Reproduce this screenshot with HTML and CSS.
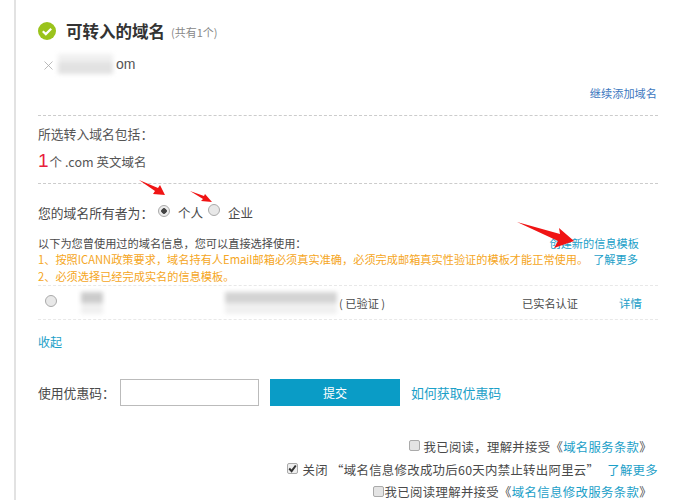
FILE: index.html
```html
<!DOCTYPE html>
<html lang="zh">
<head>
<meta charset="utf-8">
<title>可转入的域名</title>
<link rel="stylesheet" href="styles.css">
</head>
<body>
<main class="panel">
  <header class="title-row">
    <svg class="ok-icon" viewBox="0 0 18 18" width="18" height="18"><circle cx="9" cy="9" r="9" fill="#9ac31c"/><path d="M4.8 9.2l3 2.9 5.4-5.4" fill="none" stroke="#fff" stroke-width="2.2"/></svg>
    <h1 class="title">可转入的域名</h1>
    <span class="count">(共有1个)</span>
  </header>
  <div class="domain-row">
    <svg class="remove" viewBox="0 0 9 9" width="9" height="9"><path d="M.5.5l8 8M8.5.5l-8 8" stroke="#aaa" stroke-width=".8" fill="none"/></svg>
    <span class="mask mask-domain"></span>
    <span class="domain-suffix">om</span>
  </div>
  <div class="add-row"><a class="link link-blue">继续添加域名</a></div>
  <section class="summary">
    <p class="summary-label">所选转入域名包括：</p>
    <p class="summary-value"><span class="num">1</span>个 .com 英文域名</p>
  </section>
  <div class="owner-row">
    <span class="owner-label">您的域名所有者为：</span>
    <span class="radio radio-on"></span>
    <span class="owner-a">个人</span>
    <span class="radio radio-up"></span>
    <span class="owner-b">企业</span>
  </div>
  <div class="info-head">
    <span>以下为您曾使用过的域名信息，您可以直接选择使用：</span>
    <a class="link create">创建新的信息模板</a>
  </div>
  <p class="warn">1、按照ICANN政策要求，域名持有人Email邮箱必须真实准确，必须完成邮箱真实性验证的模板才能正常使用。<a class="link more">了解更多</a></p>
  <p class="warn">2、必须选择已经完成实名的信息模板。</p>
  <div class="tpl-row">
    <span class="radio tpl-radio"></span>
    <span class="mask mask-name"></span>
    <span class="mask mask-info"></span>
    <span class="verified">( 已验证 )</span>
    <span class="status">已实名认证</span>
    <a class="link detail">详情</a>
  </div>
  <div class="collapse"><a class="link">收起</a></div>
  <div class="coupon-row">
    <span class="coupon-label">使用优惠码：</span>
    <input class="coupon-input" type="text" aria-label="优惠码">
    <button class="submit" type="button">提交</button>
    <a class="link coupon-link">如何获取优惠码</a>
  </div>
  <div class="terms">
    <div class="term term-1"><span class="check"></span><span class="term-text">我已阅读，理解并接受《<a class="link">域名服务条款</a>》</span></div>
    <div class="term term-2"><span class="check check-on"><svg viewBox="0 0 11 11" width="11" height="11"><path d="M2.2 5.5l2.4 2.6 4.2-5.6" fill="none" stroke="#333" stroke-width="2"/></svg></span><span class="term-text">关闭 “域名信息修改成功后60天内禁止转出阿里云”<a class="link term-more">了解更多</a></span></div>
    <div class="term term-3"><span class="check"></span><span class="term-text term-tight">我已阅读理解并接受《<a class="link">域名信息修改服务条款</a>》</span></div>
  </div>
</main>
<svg class="arrow arrow-1" viewBox="0 0 28 17" width="28" height="17"><path d="M0 1L19 9l2-3 5 10-12-1 2-3z" fill="#f01414"/></svg>
<svg class="arrow arrow-2" viewBox="0 0 24 13" width="24" height="13"><path d="M0 1L14 6l1-2 7 8-11-1 2-2z" fill="#f01414"/></svg>
<svg class="arrow arrow-3" viewBox="0 0 60 28" width="60" height="28"><path d="M0 1L43 13l-1-6 15 13-20 7 4-7z" fill="#f01414"/></svg>
</body>
</html>
```
FILE: styles.css
```css
* { box-sizing: border-box; }
html, body { margin: 0; padding: 0; height: 500px; overflow: hidden; background: #fff; }
body { position: relative; font-family: "Noto Sans CJK SC", "Liberation Sans", sans-serif; font-size: 12px; color: #4a4a4a; }
p, h1 { margin: 0; }
.panel { margin-left: 14px; width: 644px; height: 500px; padding: 18px 0 0 22px; border-left: 2px solid #e2e2e2; }
.link { color: #1ba0c8; }
.link-blue { color: #3c78c0; }

.title-row { display: flex; align-items: center; height: 26px; }
.ok-icon { flex: none; }
.title { margin-left: 10px; font-size: 16.5px; line-height: 26px; font-weight: 700; color: #333; }
.count { margin: 2px 0 0 6px; font-size: 11px; color: #888; }

.domain-row { display: flex; align-items: center; height: 24px; margin-top: 8px; font-family: "Liberation Sans", sans-serif; font-size: 14px; }
.remove { margin: 2px 0 0 6px; }
.mask { display: block; background: #d2d2d2; filter: blur(2px); }
.mask-domain { width: 55px; height: 20px; margin-left: 5px; background: linear-gradient(#f0f0f0, #f0f0f0 40%, #e2e2e2 40%, #e2e2e2); }
.domain-suffix { margin-left: 3px; color: #555; }

.add-row { display: flex; justify-content: flex-end; height: 40px; padding: 8px 1px 0 0; line-height: 18px; font-size: 11.2px; border-bottom: 1px dashed #ccc; }

.summary { height: 68px; border-bottom: 1px dashed #ccc; font-size: 12.8px; }
.summary-label { padding-top: 9px; line-height: 18px; color: #555; }
.summary-value { display: flex; align-items: baseline; height: 30px; margin-top: 3px; font-size: 12.5px; color: #555; line-height: 30px; }
.num { font-size: 19px; color: #e8203c; font-family: "Liberation Sans", sans-serif; margin-right: 1px; }

.owner-row { display: flex; align-items: center; height: 20px; margin-top: 18px; font-size: 12.5px; }
.owner-label { width: 120px; font-size: 12.8px; }
.radio { display: block; flex: none; width: 12px; height: 12px; border-radius: 50%; border: 1px solid #aaa; background: #e8e8e8; }
.radio-on { margin-top: -3px; background: radial-gradient(circle, #444 0 2.5px, #ececec 3px); }
.owner-a { margin-left: 8px; width: 30px; font-size: 12.5px; }
.radio-up { margin-top: -4px; }
.owner-b { margin-left: 8px; font-size: 12.5px; }

.info-head { display: flex; justify-content: space-between; height: 16px; margin-top: 13px; padding-right: 19px; line-height: 16px; font-size: 11.2px; }
.create { font-size: 11.2px; }
.warn { height: 17px; line-height: 17px; font-size: 11.2px; color: #f5a623; white-space: nowrap; }
.more { margin-left: 5px; font-size: 11.2px; }

.tpl-row { display: flex; align-items: center; height: 35px; border-top: 1px dashed #e8e8e8; border-bottom: 1px dashed #e8e8e8; }
.tpl-radio { margin-left: 7px; margin-top: -3px; }
.mask-name { width: 22px; height: 22px; margin-left: 24px; background: linear-gradient(#cccccc 50%, #f0f0f0 50%); }
.mask-info { width: 112px; height: 22px; margin-left: 122px; background: linear-gradient(#d4d4d4 50%, #f0f0f0 50%); }
.verified { margin-left: 2px; width: 183px; font-size: 11.2px; }
.status { width: 97px; font-size: 11.2px; }
.detail { font-size: 11.4px; }

.collapse { height: 18px; margin-top: 13px; line-height: 18px; }

.coupon-row { display: flex; align-items: center; height: 28px; margin-top: 27px; }
.coupon-label { width: 82px; font-size: 12.8px; }
.coupon-input { width: 139px; height: 27px; margin: 1px 0 0 0; padding: 0; background: #fff; border: 1px solid #bbb; }
.submit { width: 130px; height: 27px; margin: 0 0 0 11px; padding: 0; border: 0; background: #0a9cc6; color: #fff; font: inherit; font-size: 12px; }
.coupon-link { margin-left: 11px; font-size: 12.9px; }

.terms { margin-top: 29px; display: flex; flex-direction: column; align-items: flex-end; }
.term { display: flex; align-items: center; height: 23px; white-space: nowrap; }
.term-text { font-size: 12.4px; letter-spacing: .3px; }
.term-tight { letter-spacing: .35px; }
.term-more { margin-left: 8px; }
.term-1 { padding-right: 6px; height: 23px; }
.term-3 { padding-right: 6px; height: 22px; }
.check { display: flex; flex: none; width: 11px; height: 11px; margin: -2px 4px 0 0; background: #e4e4e4; border: 1px solid #aaa; border-radius: 2px; }
.check-on { background: #eee; margin-right: 5px; }
.check svg { margin: -1px; }
.term-3 .check { margin-right: 0; }

.arrow { position: absolute; }
.arrow-1 { left: 139px; top: 179px; }
.arrow-2 { left: 190px; top: 190px; }
.arrow-3 { left: 517px; top: 221px; }
```
